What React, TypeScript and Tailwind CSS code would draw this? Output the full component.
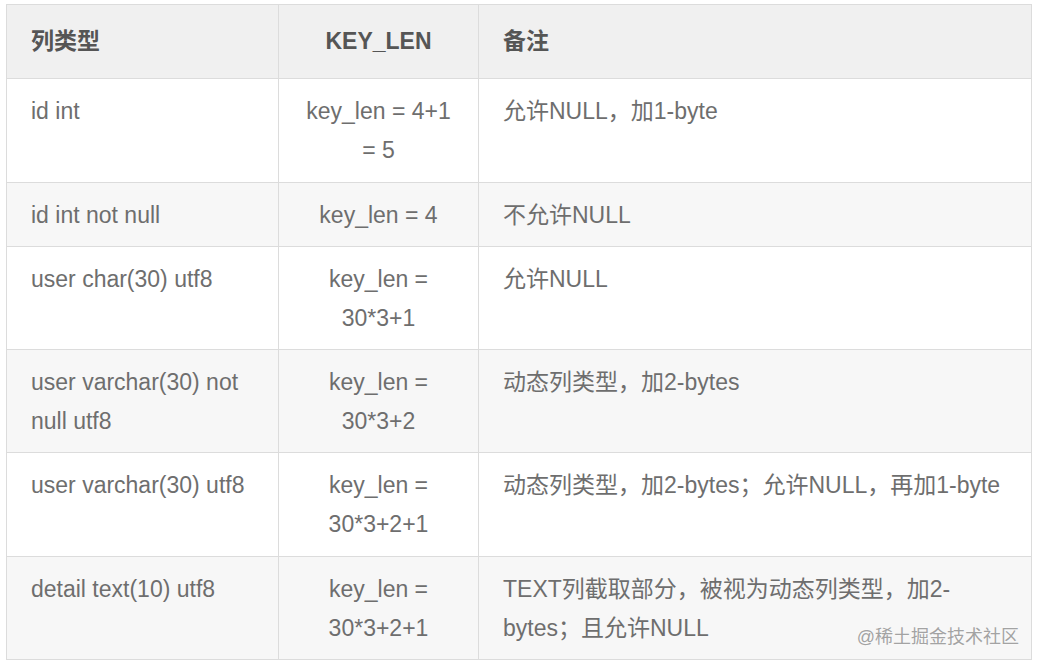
import React from 'react'

const rows: { col: React.ReactNode; len: React.ReactNode; note: React.ReactNode; h: string; alt: boolean }[] = [
    { col: 'id int', len: <>key_len = 4+1<br />= 5</>, note: '允许NULL，加1-byte', h: 'h-[104px]', alt: false },
    { col: 'id int not null', len: 'key_len = 4', note: '不允许NULL', h: 'h-[64px]', alt: true },
    { col: 'user char(30) utf8', len: <>key_len =<br />30*3+1</>, note: '允许NULL', h: 'h-[103px]', alt: false },
    { col: <>user varchar(30) not<br />null utf8</>, len: <>key_len =<br />30*3+2</>, note: '动态列类型，加2-bytes', h: 'h-[103px]', alt: true },
    { col: 'user varchar(30) utf8', len: <>key_len =<br />30*3+2+1</>, note: '动态列类型，加2-bytes；允许NULL，再加1-byte', h: 'h-[104px]', alt: false },
    { col: 'detail text(10) utf8', len: <>key_len =<br />30*3+2+1</>, note: <>TEXT列截取部分，被视为动态列类型，加2-<br />bytes；且允许NULL</>, h: 'h-[103px]', alt: true },
]

export default function App() {
    return (
        <div className="relative h-[665px] w-[1039px] overflow-hidden bg-white pl-[6px] pt-[4px] font-['Liberation_Sans','Noto_Sans_CJK_SC',sans-serif] text-[23px] leading-[39px] text-[#6e6e6e]">
            <table className="w-[1026px] table-fixed border-collapse">
                <colgroup>
                    <col className="w-[272px]" />
                    <col className="w-[200px]" />
                    <col />
                </colgroup>
                <thead>
                    <tr className="h-[74px] bg-[#f0f0f0] font-bold text-[#555]">
                        <th className="border border-[#dcdcdc] px-6 text-left align-middle">列类型</th>
                        <th className="border border-[#dcdcdc] px-6 text-center align-middle">KEY_LEN</th>
                        <th className="border border-[#dcdcdc] px-6 text-left align-middle">备注</th>
                    </tr>
                </thead>
                <tbody>
                    {rows.map((r, i) => (
                        <tr key={i} className={`${r.h} ${r.alt ? 'bg-[#f7f7f7]' : 'bg-white'}`}>
                            <td className="border border-[#dcdcdc] px-6 pt-[13px] align-top">{r.col}</td>
                            <td className="border border-[#dcdcdc] px-6 pt-[13px] text-center align-top">{r.len}</td>
                            <td className="border border-[#dcdcdc] px-6 pt-[13px] align-top">{r.note}</td>
                        </tr>
                    ))}
                </tbody>
            </table>
            <div className="absolute bottom-[16px] right-[20px] text-[18px] leading-[24px] text-[#a3a3a3] [text-shadow:0_0_2px_#fff]">
                @稀土掘金技术社区
            </div>
        </div>
    )
}
